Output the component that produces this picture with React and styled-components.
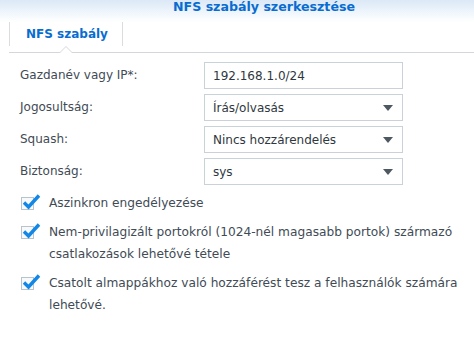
import React from "react";
import styled, { createGlobalStyle } from "styled-components";

const GlobalStyle = createGlobalStyle`
  html, body { margin: 0; padding: 0; background: #ffffff; }
  body {
    font-family: "DejaVu Sans", Verdana, sans-serif;
    color: #414b55;
    overflow: hidden;
  }
`;

const Page = styled.div`
  width: 474px;
  height: 351px;
  overflow: hidden;
  background: #ffffff;
`;

const Header = styled.div`
  height: 22px;
  background: linear-gradient(to bottom, #dbe8f6 0%, #edf4fb 50%, #ffffff 100%);
  padding-left: 54px;
  text-align: center;
  box-sizing: border-box;
`;

const Title = styled.div`
  font-size: 12.6px;
  font-weight: bold;
  line-height: 14px;
  color: #086cd0;
`;

const TabBar = styled.div`
  margin-left: 9px;
  padding-bottom: 6px;
  border-bottom: 1px solid #d3d7db;
  display: flex;
`;

const Tab = styled.div`
  position: relative;
  width: 114px;
  height: 24px;
  box-sizing: border-box;
  border-left: 1px solid #dadde0;
  border-right: 1px solid #dadde0;
  display: flex;
  align-items: center;
  justify-content: center;
  padding-left: 2px;
  font-size: 12px;
  font-weight: bold;
  color: ${(p) => (p.$active ? "#086cd0" : "#66707a")};

  &::before, &::after {
    content: "";
    position: absolute;
    left: 50%;
    width: 0;
    height: 0;
    transform: translateX(-50%);
    display: ${(p) => (p.$active ? "block" : "none")};
  }
  &::before {
    bottom: -7px;
    border-left: 7px solid transparent;
    border-right: 7px solid transparent;
    border-bottom: 7px solid #d3d7db;
  }
  &::after {
    bottom: -8px;
    border-left: 7px solid transparent;
    border-right: 7px solid transparent;
    border-bottom: 7px solid #ffffff;
  }
`;

const Form = styled.div`
  padding: 9px 0 0 20px;
  display: grid;
  grid-template-columns: 184px 199px;
  row-gap: 5px;
`;

const Label = styled.div`
  font-size: 12px;
  line-height: 27px;
  color: #414b55;
`;

const Field = styled.div`
  height: 27px;
  box-sizing: border-box;
  border: 1px solid #c9d1d9;
  background: #ffffff;
  display: flex;
  align-items: center;
  justify-content: space-between;
  padding: 0 9px 0 8px;
  font-size: 12px;
  color: #2f3840;
`;

const Arrow = styled.span`
  width: 0;
  height: 0;
  border-left: 5px solid transparent;
  border-right: 5px solid transparent;
  border-top: 6px solid #4e5860;
`;

const Checks = styled.div`
  padding: 7px 0 0 21px;
  display: flex;
  flex-direction: column;
  gap: 7px;
`;

const CheckRow = styled.div`
  display: flex;
  align-items: flex-start;
  gap: 15px;
`;

const Box = styled.span`
  position: relative;
  flex: none;
  width: 13px;
  height: 13px;
  margin-top: 5px;
  box-sizing: border-box;
  border: 1px solid #b9c3cc;
  background: #f7f9fb;
`;

const Tick = styled.svg`
  position: absolute;
  left: 1px;
  top: -4px;
  overflow: visible;
`;

const CheckText = styled.div`
  font-size: 12.2px;
  line-height: 22px;
  color: #414b55;
  width: 410px;
`;

const Note = styled.div`
  margin: 31px 0 0 20px;
  font-size: 12px;
  line-height: 22px;
  color: #414b55;
`;

function Check({ children }) {
  return (
    <CheckRow>
      <Box>
        <Tick width="17" height="15" viewBox="0 0 17 15">
          <path d="M1 8.5 L5.5 13 L16 1.5" fill="none" stroke="#1287e6" strokeWidth="3.4" strokeLinejoin="miter" />
        </Tick>
      </Box>
      <CheckText>{children}</CheckText>
    </CheckRow>
  );
}

function Select({ value }) {
  return (
    <Field>
      <span>{value}</span>
      <Arrow />
    </Field>
  );
}

export default function App() {
  return (
    <Page>
      <GlobalStyle />
      <Header>
        <Title>NFS szabály szerkesztése</Title>
      </Header>
      <TabBar>
        <Tab $active>NFS szabály</Tab>
      </TabBar>
      <Form>
        <Label>Gazdanév vagy IP*:</Label>
        <Field>
          <span>192.168.1.0/24</span>
        </Field>
        <Label>Jogosultság:</Label>
        <Select value="Írás/olvasás" />
        <Label>Squash:</Label>
        <Select value="Nincs hozzárendelés" />
        <Label>Biztonság:</Label>
        <Select value="sys" />
      </Form>
      <Checks>
        <Check>Aszinkron engedélyezése</Check>
        <Check>
          Nem-privilagizált portokról (1024-nél magasabb portok) származó
          csatlakozások lehetővé tétele
        </Check>
        <Check>
          Csatolt almappákhoz való hozzáférést tesz a felhasználók számára
          lehetővé.
        </Check>
      </Checks>
      <Note>Lásd a kiterjesztett jogosultságok beállításait.</Note>
    </Page>
  );
}
